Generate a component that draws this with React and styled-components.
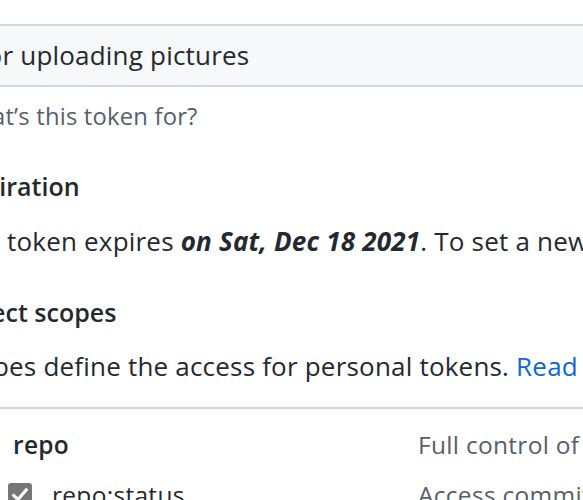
import React from "react";
import styled, { createGlobalStyle } from "styled-components";

const Global = createGlobalStyle`
  html, body { margin: 0; padding: 0; background: #ffffff; }
  body {
    width: 583px; height: 500px; overflow: hidden;
    font-family: "Open Sans", "Noto Sans", sans-serif;
    color: #24292f;
  }
`;

const Page = styled.div`
  margin-top: -28px;
  margin-left: -50px;
  width: 2400px;
  font-size: 26px;
  letter-spacing: 0.2px;
  line-height: 36px;
  white-space: nowrap;
`;

const Label = styled.label`
  display: block;
  margin-left: 16px;
  font-size: 24.5px;
  font-weight: 600;
  letter-spacing: 0;
`;

const TextInput = styled.input`
  display: block;
  box-sizing: border-box;
  margin-top: 15.5px;
  width: 760px;
  height: 63px;
  padding: 0 21px;
  border: 2px solid #d0d7de;
  border-radius: 10px;
  background: #f6f8fa;
  font-family: inherit;
  font-size: 26px;
  letter-spacing: 0.2px;
  color: #24292f;
  outline: none;
`;

const Note = styled.p`
  margin: 14px 0 0 5px;
  font-size: 23.8px;
  line-height: 31.5px;
  color: #57606a;
`;

const Heading = styled.h3`
  margin: ${p => p.$gap}px 0 0 6px;
  font-size: 25px;
  letter-spacing: 0;
  line-height: 36px;
  font-weight: 600;
`;

const Text = styled.p`
  margin: ${p => p.$gap}px 0 0;
  line-height: 36px;
`;

const Link = styled.a`
  color: #0969da;
  text-decoration: none;
`;

const Scopes = styled.div`
  margin-top: 22.5px;
  margin-left: 12px;
  border-top: 2px solid #d0d7de;
  padding-top: 18.5px;
  font-size: 24.5px;
  letter-spacing: 0.3px;
`;

const Row = styled.div`
  display: grid;
  grid-template-columns: 456px 1fr;
  align-items: center;
  margin-top: ${p => p.$gap || 0}px;
`;

const ScopeLabel = styled.label`
  display: flex;
  align-items: center;
  gap: 20px;
  padding-left: ${p => (p.$nested ? 46 : 7)}px;
  font-weight: ${p => (p.$nested ? 400 : 600)};
`;

const Box = styled.span`
  width: 24px;
  height: 24px;
  flex: none;
  border-radius: 3px;
  background: #767676;
  display: flex;
  align-items: center;
  justify-content: center;
`;

const Desc = styled.span`
  color: #57606a;
`;

function Check() {
  return (
    <Box>
      <svg width="18" height="18" viewBox="0 0 16 16">
        <path d="M2.5 8.5 L6.2 12 L13.5 3.5" fill="none" stroke="#fff" strokeWidth="2.8" strokeLinecap="square" />
      </svg>
    </Box>
  );
}

export default function App() {
  return (
    <>
      <Global />
      <Page>
        <Label>Note</Label>
        <TextInput defaultValue="For uploading pictures" readOnly />
        <Note>What’s this token for?</Note>
        <Heading $gap={36}>Expiration</Heading>
        <Text $gap={19}>
          This token expires <b><i>on Sat, Dec 18 2021</i></b>. To set a new expiration date, you must generate a new token.
        </Text>
        <Heading $gap={35}>Select scopes</Heading>
        <Text $gap={18}>
          Scopes define the access for personal tokens. <Link href="#">Read more about OAuth scopes.</Link>
        </Text>
        <Scopes>
          <Row>
            <ScopeLabel><Check />repo</ScopeLabel>
            <Desc>Full control of private repositories</Desc>
          </Row>
          <Row $gap={14}>
            <ScopeLabel $nested><Check />repo:status</ScopeLabel>
            <Desc>Access commit status</Desc>
          </Row>
        </Scopes>
      </Page>
    </>
  );
}
